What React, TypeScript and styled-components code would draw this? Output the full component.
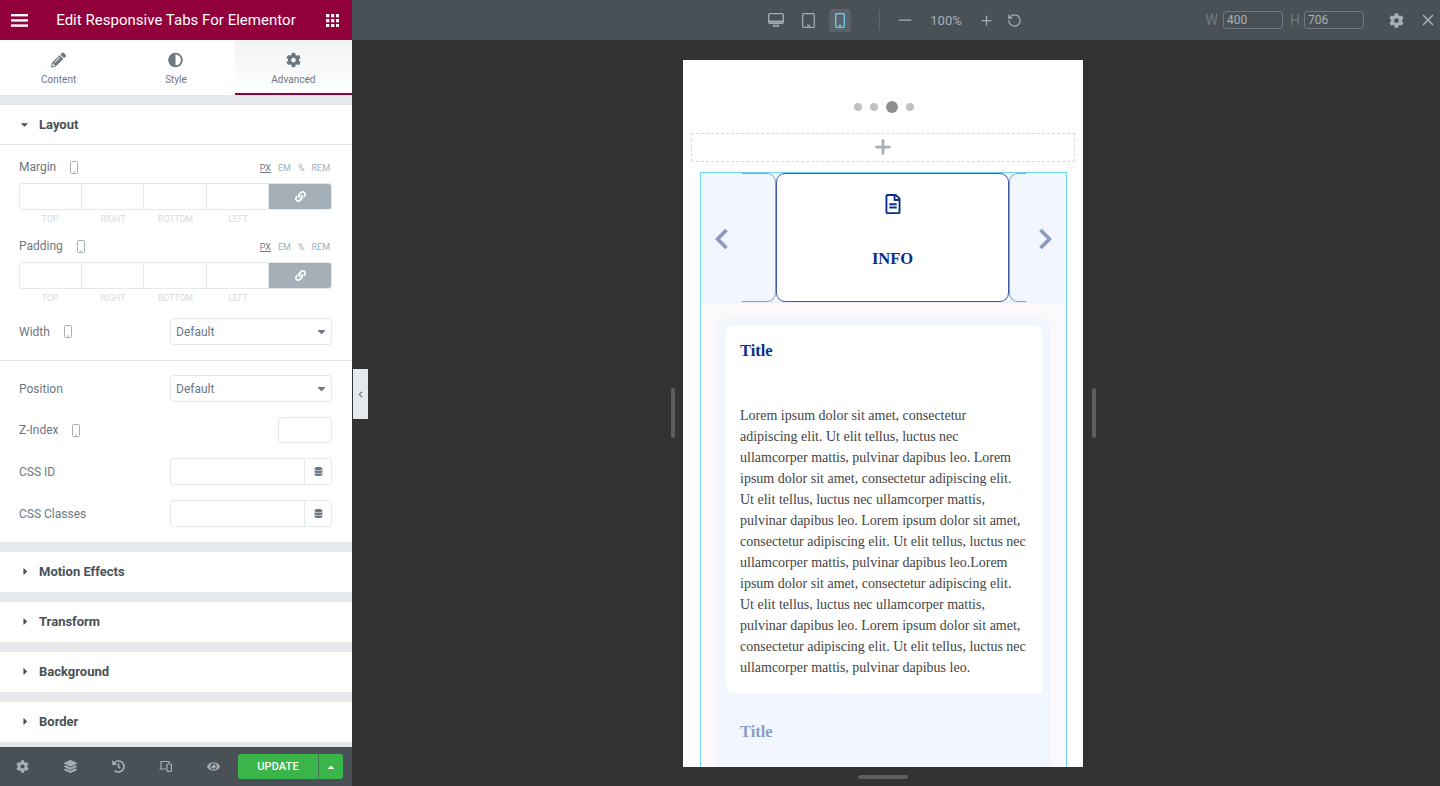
import React from 'react';
import styled, { createGlobalStyle } from 'styled-components';
import { FaPencilAlt, FaAdjust, FaCog, FaLink, FaDatabase, FaLayerGroup, FaHistory, FaEye, FaRegFileAlt, FaCaretDown, FaCaretRight, FaCaretUp, FaChevronLeft } from 'react-icons/fa';
import { X, Plus, Minus, RotateCcw } from 'lucide-react';

const Global = createGlobalStyle`
  html, body { margin: 0; padding: 0; height: 786px; overflow: hidden; background: #333; }
  * { box-sizing: border-box; }
  body { font-family: Roboto, "Liberation Sans", sans-serif; }
`;

const Shell = styled.div`display: flex; width: 1440px; height: 786px; overflow: hidden;`;
const Side = styled.aside`width: 352px; height: 786px; display: flex; flex-direction: column; background: #fff; flex: none;`;
const SideHead = styled.header`height: 40px; flex: none; background: #92003b; color: #fff; display: flex; align-items: center; padding: 0 13px 0 11px;`;
const SideTitle = styled.div`flex: 1; text-align: center; font-size: 15px; padding-right: 2px; letter-spacing: .02px;`;
const Tabs = styled.nav`height: 55px; flex: none; display: flex; background: #fff;`;
const Tab = styled.div<{ $on?: boolean }>`
  flex: 1; display: flex; flex-direction: column; align-items: center; padding-top: 12px; gap: 6px;
  font-size: 10px; color: #6d7882;
  background: ${p => p.$on ? 'linear-gradient(#f1f3f5, #fff)' : '#fff'};
  border-bottom: 2px solid ${p => p.$on ? '#92003b' : 'transparent'};
  svg { font-size: 15px; color: #6d7882; height: 16px; }
`;
const Gap = styled.div<{ $h?: number }>`height: ${p => p.$h ?? 10}px; background: #e6e9ec; flex: none;`;
const SecHead = styled.div<{ $open?: boolean }>`
  height: 40px; display: flex; align-items: center; padding-left: ${p => p.$open ? 19 : 20}px; gap: ${p => p.$open ? 9 : 8}px;
  padding-bottom: ${p => p.$open ? 0 : 2}px;
  font-size: 13px; font-weight: 700; color: #495157; flex: none;
  border-bottom: ${p => p.$open ? '1px solid #e6e9ec' : '0'};
  svg { font-size: 11px; color: #495157; }
`;
const Body = styled.div`padding: 0 20px 15px 19px; display: flex; flex-direction: column; flex: none;`;
const LabelRow = styled.div<{ $top: number }>`
  height: 16px; margin-top: ${p => p.$top}px; display: flex; align-items: center; font-size: 12px; color: #6d7882; gap: 14px;
`;
const Units = styled.div`margin: 2px 0 0 auto; display: flex; gap: 7px; font-size: 9px; color: #a4afb7; padding-right: 2px; u { color: #6d7882; }`;
const Dims = styled.div`
  margin-top: 8px; height: 27px; display: grid; grid-template-columns: repeat(5, 1fr); border: 1px solid #e6e9ec; border-radius: 3px; overflow: hidden;
`;
const Dim = styled.div`border-right: 1px solid #e6e9ec;`;
const LinkBtn = styled.div`
  background: #a4afb7; color: #fff; display: flex; align-items: center; justify-content: center; font-size: 11px; margin: -1px -1px -1px 0;
`;
const DimLabels = styled.div`
  margin-top: 4px; height: 11px; display: grid; grid-template-columns: repeat(5, 1fr); font-size: 8.5px; color: #d5dadf; text-align: center; letter-spacing: .1px;
`;
const Field = styled.div<{ $top: number }>`
  margin-top: ${p => p.$top}px; display: flex; align-items: center; justify-content: space-between; font-size: 12px; color: #6d7882;
`;
const FieldLabel = styled.div`display: flex; align-items: center; gap: 14px;`;
const Select = styled.div`
  width: 162px; height: 27px; border: 1px solid #e6e9ec; border-radius: 3px; display: flex; align-items: center; justify-content: space-between;
  padding: 0 3px 0 5px; font-size: 12px; color: #6d7882;
  svg { font-size: 13px; color: #6d7882; }
`;
const SmallInput = styled.div`width: 54px; height: 26px; border: 1px solid #e6e9ec; border-radius: 3px;`;
const DynInput = styled.div`
  width: 162px; height: 27px; border: 1px solid #e6e9ec; border-radius: 3px; display: flex; justify-content: flex-end;
`;
const DynBtn = styled.div`width: 27px; border-left: 1px solid #e6e9ec; display: flex; align-items: center; justify-content: center; font-size: 9px; color: #6d7882;`;
const Divider = styled.div`height: 1px; background: #e6e9ec; margin: 15px -20px 0 -19px;`;
const Foot = styled.footer`
  height: 39px; flex: none; background: #495157; display: flex; align-items: center; padding: 0 9px 0 16px; color: #a4afb7;
`;
const FootIcons = styled.div`display: flex; width: 204px; justify-content: space-between; margin-right: 18px; font-size: 13px; svg { display: block; }`;
const FootBtn = styled.div`width: 13px; display: flex; justify-content: center;`;
const Update = styled.div`
  width: 105px; height: 25px; background: #39b54a; border-radius: 3px; color: #fff; font-size: 11px; font-weight: 500; display: flex; overflow: hidden;
`;
const UpdateLabel = styled.div`flex: 1; display: flex; align-items: center; justify-content: center; letter-spacing: .1px;`;
const UpdateCaret = styled.div`width: 25px; border-left: 1px solid #495157aa; display: flex; align-items: center; justify-content: center; font-size: 10px;`;

const Main = styled.main`flex: 1; display: flex; flex-direction: column; position: relative; background: #333; min-width: 0;`;
const TopBar = styled.div`
  height: 40px; background: #495157; color: #a4afb7; display: flex; align-items: center; flex: none; padding: 0 3px 0 413px;
`;
const DeviceBtn = styled.div<{ $on?: boolean }>`
  width: 22px; height: 23px; margin-right: 10px; border-radius: 3px; display: flex; align-items: center; justify-content: center;
  background: ${p => p.$on ? '#596268' : 'transparent'}; color: ${p => p.$on ? '#71d7f7' : '#a4afb7'};
`;
const VSep = styled.div`width: 1px; height: 20px; background: #5f676d; margin: 0 15px 0 18px;`;
const Pct = styled.div`font-size: 13px; margin: 0 17px 0 15px; width: 32px; text-align: center;`;
const Reload = styled.span`display: flex; margin-left: 13px;`;
const RightTools = styled.div`
  margin-left: auto; display: flex; align-items: center; font-size: 14px; color: #6d7882;
`;
const SizeBox = styled.div<{ $end?: boolean }>`
  width: 60px; height: 18px; border: 1px solid #6d7882; border-radius: 3px; color: #a4afb7; font-size: 12px; line-height: 17px; padding-left: 3px;
  margin: 0 ${p => p.$end ? 25 : 7}px 0 ${p => p.$end ? 4 : 5}px;
`;
const GearWrap = styled.span`display: flex; margin-right: 15px; color: #a4afb7;`;
const Handle = styled.div`
  position: absolute; left: 1px; top: 369px; width: 15px; height: 50px; background: #e6e9ec; color: #6d7882; display: flex; align-items: center; justify-content: center; font-size: 7px;
`;
const SideGrip = styled.div<{ $x: number }>`
  position: absolute; left: ${p => p.$x}px; top: 388px; width: 4px; height: 50px; border-radius: 3px; background: #5e5e5e;
`;
const BottomGrip = styled.div`
  position: absolute; left: 506px; top: 775px; width: 50px; height: 4px; border-radius: 3px; background: #5e5e5e;
`;
const Stage = styled.div`flex: 1; display: flex; justify-content: center; padding: 20px 26px 19px 0; min-height: 0;`;
const Frame = styled.div`width: 400px; height: 707px; background: #fff; overflow: hidden; padding: 0 8px; font-family: "Liberation Serif", serif;`;
const Dots = styled.div`height: 73px; padding: 41px 0 20px 1px; display: flex; justify-content: center; align-items: center; gap: 8px;`;
const Dot = styled.span<{ $big?: boolean }>`
  width: ${p => p.$big ? 12 : 8}px; height: ${p => p.$big ? 12 : 8}px; border-radius: 50%;
  background: ${p => p.$big ? '#8f8f8f' : '#c0c0c0'};
`;
const AddSection = styled.div`
  height: 29px; padding-bottom: 2px; border: 1px dashed #d5dadf; color: #a4afb7; display: flex; align-items: center; justify-content: center;
`;
const Widget = styled.div`
  margin: 10px 8px 0 9px; height: 600px; border: 1px solid #71d7f7; border-bottom: 0; background: #fbf9fb;
`;
const TabBar = styled.div`height: 130px; background: #f2f6fe; display: flex; align-items: stretch; border-bottom: 1px solid #e9edf5;`;
const Arrow = styled.div<{ $w: number }>`width: ${p => p.$w}px; padding-top: 3px; display: flex; align-items: center; justify-content: center; color: #8b9bbd; flex: none;`;
const SideTab = styled.div<{ $right?: boolean }>`
  flex: none; border: solid #8b9fc6; border-width: 1px 0;
  ${p => p.$right
    ? 'border-left: 1px solid #8b9fc6; border-top-left-radius: 9px; border-bottom-left-radius: 9px; width: 17px;'
    : 'border-right: 1px solid #8b9fc6; border-top-right-radius: 9px; border-bottom-right-radius: 9px; width: 34px;'}
`;
const ActiveTab = styled.div`
  width: 233px; flex: none; background: #fff; border: 1px solid #3b5ba5; border-radius: 9px; display: flex; flex-direction: column; align-items: center;
  color: #0a2f8a; padding-top: 20px; font-size: 16.5px; font-weight: 700;
  svg { font-size: 20px; margin-bottom: 36px; }
  span { line-height: 18px; }
`;
const TabFill = styled.div`flex: 1;`;
const Content = styled.div`padding: 15px 16px 0 16px; background: #fbf9fb;`;
const Panel = styled.div`background: #f2f6fe; border-radius: 9px 9px 0 0; padding: 8px 8px 0 9px; height: 460px;`;
const Card = styled.div`background: #fff; border-radius: 8px 8px 0 8px; padding: 16px 14px 0 14px; height: 367px;`;
const Title = styled.div<{ $muted?: boolean }>`
  font-size: 16.5px; font-weight: 700; line-height: 18px; color: ${p => p.$muted ? '#8b9dc4' : '#0a2f8a'};
  ${p => p.$muted ? 'margin: 30px 0 0 14px;' : ''}
`;
const Para = styled.p`margin: 45px 0 0; max-width: 286.5px; font-size: 14px; line-height: 21px; color: #444;`;

const Hamburger = () => (
  <svg width="17" height="13" viewBox="0 0 17 13" fill="#fff"><rect width="17" height="2.4" y="0" /><rect width="17" height="2.4" y="5.2" /><rect width="17" height="2.4" y="10.4" /></svg>
);
const Grid = () => (
  <svg width="13" height="13" viewBox="0 0 13 13" fill="#fff">
    {[0, 5, 10].flatMap(y => [0, 5, 10].map(x => <rect key={`${x}-${y}`} x={x} y={y} width="3.3" height="3.3" />))}
  </svg>
);
const PhoneSmall = () => (
  <svg width="8" height="13" viewBox="0 0 8 13" fill="none" stroke="#a4afb7" strokeWidth="1"><rect x=".5" y=".5" width="7" height="12" rx="1" /><path d="M3 11h2" /></svg>
);
const Desktop = () => (
  <svg width="16" height="14" viewBox="0 0 16 14" fill="none" stroke="currentColor"><rect x=".7" y=".7" width="14.6" height="9.6" rx="1" strokeWidth="1.3" /><path d="M.7 8.6h14.6" strokeWidth="2" /><path d="M4.5 13.2h7M6.5 11v2M9.5 11v2" strokeWidth="1.2" /></svg>
);
const Tablet = () => (
  <svg width="13" height="15" viewBox="0 0 13 15" fill="none" stroke="currentColor" strokeWidth="1.2"><rect x=".7" y=".7" width="11.6" height="13.6" rx="1" /><path d="M5 12.5h3" strokeWidth="1.6" /></svg>
);
const Phone = () => (
  <svg width="10" height="15" viewBox="0 0 10 15" fill="none" stroke="currentColor" strokeWidth="1.2"><rect x=".7" y=".7" width="8.6" height="13.6" rx="1" /><path d="M3.5 12.5h3" strokeWidth="1.4" /></svg>
);
const Responsive = () => (
  <svg width="13" height="12" viewBox="0 0 13 12" fill="none" stroke="currentColor" strokeWidth="1.2"><path d="M7 9H.5M2 8.5V1.5h8v2" /><rect x="8" y="4" width="4.4" height="7.4" rx=".6" /></svg>
);
const Chevron = ({ right }: { right?: boolean }) => (
  <svg width="14" height="22" viewBox="0 0 14 22" fill="none" stroke="currentColor" strokeWidth="3.6">
    <path d={right ? 'M2.5 2l9 9-9 9' : 'M11.5 2l-9 9 9 9'} />
  </svg>
);

const para = 'Lorem ipsum dolor sit amet, consectetur adipiscing elit. Ut elit tellus, luctus nec ullamcorper mattis, pulvinar dapibus leo. Lorem ipsum dolor sit amet, consectetur adipiscing elit. Ut elit tellus, luctus nec ullamcorper mattis, pulvinar dapibus leo. Lorem ipsum dolor sit amet, consectetur adipiscing elit. Ut elit tellus, luctus nec ullamcorper mattis, pulvinar dapibus leo.Lorem ipsum dolor sit amet, consectetur adipiscing elit. Ut elit tellus, luctus nec ullamcorper mattis, pulvinar dapibus leo. Lorem ipsum dolor sit amet, consectetur adipiscing elit. Ut elit tellus, luctus nec ullamcorper mattis, pulvinar dapibus leo.';

const DimControl = () => (
  <>
    <Dims><Dim /><Dim /><Dim /><Dim /><LinkBtn><FaLink /></LinkBtn></Dims>
    <DimLabels><span>TOP</span><span>RIGHT</span><span>BOTTOM</span><span>LEFT</span><span /></DimLabels>
  </>
);
const UnitList = () => <Units><u>PX</u><span>EM</span><span>%</span><span>REM</span></Units>;

export default function App() {
  return (
    <Shell>
      <Global />
      <Side>
        <SideHead><Hamburger /><SideTitle>Edit Responsive Tabs For Elementor</SideTitle><Grid /></SideHead>
        <Tabs>
          <Tab><FaPencilAlt />Content</Tab>
          <Tab><FaAdjust />Style</Tab>
          <Tab $on><FaCog />Advanced</Tab>
        </Tabs>
        <Gap />
        <SecHead $open><FaCaretDown />Layout</SecHead>
        <Body>
          <LabelRow $top={14}>Margin <PhoneSmall /><UnitList /></LabelRow>
          <DimControl />
          <LabelRow $top={13}>Padding <PhoneSmall /><UnitList /></LabelRow>
          <DimControl />
          <Field $top={14}><FieldLabel>Width <PhoneSmall /></FieldLabel><Select>Default<FaCaretDown /></Select></Field>
          <Divider />
          <Field $top={14}>Position<Select>Default<FaCaretDown /></Select></Field>
          <Field $top={15}><FieldLabel>Z-Index <PhoneSmall /></FieldLabel><SmallInput /></Field>
          <Field $top={15}>CSS ID<DynInput><DynBtn><FaDatabase /></DynBtn></DynInput></Field>
          <Field $top={15}>CSS Classes<DynInput><DynBtn><FaDatabase /></DynBtn></DynInput></Field>
        </Body>
        <Gap />
        <SecHead><FaCaretRight />Motion Effects</SecHead>
        <Gap />
        <SecHead><FaCaretRight />Transform</SecHead>
        <Gap />
        <SecHead><FaCaretRight />Background</SecHead>
        <Gap />
        <SecHead><FaCaretRight />Border</SecHead>
        <Gap $h={5} />
        <Foot>
          <FootIcons>
            <FootBtn><FaCog /></FootBtn>
            <FootBtn><FaLayerGroup /></FootBtn>
            <FootBtn><FaHistory /></FootBtn>
            <FootBtn><Responsive /></FootBtn>
            <FootBtn><FaEye /></FootBtn>
          </FootIcons>
          <Update><UpdateLabel>UPDATE</UpdateLabel><UpdateCaret><FaCaretUp /></UpdateCaret></Update>
        </Foot>
      </Side>
      <Main>
        <TopBar>
          <DeviceBtn><Desktop /></DeviceBtn>
          <DeviceBtn><Tablet /></DeviceBtn>
          <DeviceBtn $on><Phone /></DeviceBtn>
          <VSep />
          <Minus size={20} strokeWidth={1.5} />
          <Pct>100%</Pct>
          <Plus size={15} strokeWidth={2} />
          <Reload><RotateCcw size={15} /></Reload>
          <RightTools>
            W<SizeBox>400</SizeBox>H<SizeBox $end>706</SizeBox>
            <GearWrap><FaCog size={15} /></GearWrap>
            <X size={18} color="#a4afb7" />
          </RightTools>
        </TopBar>
        <Stage>
          <Frame>
            <Dots><Dot /><Dot /><Dot $big /><Dot /></Dots>
            <AddSection><Plus size={22} strokeWidth={3} /></AddSection>
            <Widget>
              <TabBar>
                <Arrow $w={41}><Chevron /></Arrow>
                <SideTab />
                <ActiveTab><FaRegFileAlt /><span>INFO</span></ActiveTab>
                <SideTab $right />
                <Arrow $w={38}><Chevron right /></Arrow>
                <TabFill />
              </TabBar>
              <Content>
                <Panel>
                  <Card>
                    <Title>Title</Title>
                    <Para>{para}</Para>
                  </Card>
                  <Title $muted>Title</Title>
                </Panel>
              </Content>
            </Widget>
          </Frame>
        </Stage>
        <Handle><FaChevronLeft /></Handle>
        <SideGrip $x={319} />
        <SideGrip $x={740} />
        <BottomGrip />
      </Main>
    </Shell>
  );
}
